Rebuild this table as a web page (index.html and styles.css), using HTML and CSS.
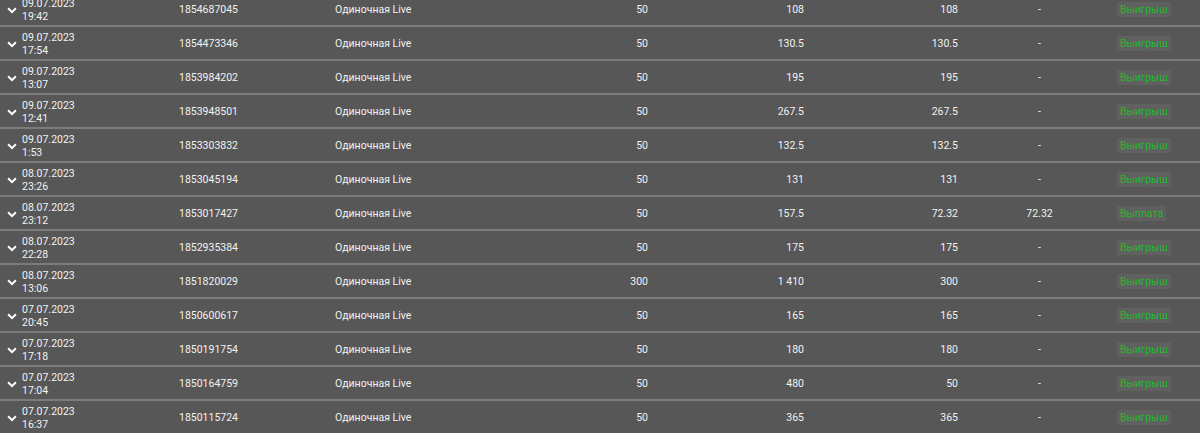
FILE: index.html
```html
<!DOCTYPE html>
<html lang="ru">
<head>
    <meta charset="UTF-8">
    <meta name="viewport" content="width=device-width, initial-scale=1.0">
    <title>История ставок</title>
    <link rel="stylesheet" href="styles.css">
</head>
<body>
    <div class="bets">
        <div class="bet-row">
            <div class="cell date"><svg class="chevron" viewBox="0 0 9 6"><polyline points="1,1 4.5,4.5 8,1"/></svg><span>09.07.2023<br>19:42</span></div>
            <div class="cell">1854687045</div>
            <div class="cell">Одиночная Live</div>
            <div class="cell num">50</div>
            <div class="cell num">108</div>
            <div class="cell num">108</div>
            <div class="cell center">-</div>
            <div class="cell"><span class="status">Выигрыш</span></div>
        </div>
        <div class="bet-row">
            <div class="cell date"><svg class="chevron" viewBox="0 0 9 6"><polyline points="1,1 4.5,4.5 8,1"/></svg><span>09.07.2023<br>17:54</span></div>
            <div class="cell">1854473346</div>
            <div class="cell">Одиночная Live</div>
            <div class="cell num">50</div>
            <div class="cell num">130.5</div>
            <div class="cell num">130.5</div>
            <div class="cell center">-</div>
            <div class="cell"><span class="status">Выигрыш</span></div>
        </div>
        <div class="bet-row">
            <div class="cell date"><svg class="chevron" viewBox="0 0 9 6"><polyline points="1,1 4.5,4.5 8,1"/></svg><span>09.07.2023<br>13:07</span></div>
            <div class="cell">1853984202</div>
            <div class="cell">Одиночная Live</div>
            <div class="cell num">50</div>
            <div class="cell num">195</div>
            <div class="cell num">195</div>
            <div class="cell center">-</div>
            <div class="cell"><span class="status">Выигрыш</span></div>
        </div>
        <div class="bet-row">
            <div class="cell date"><svg class="chevron" viewBox="0 0 9 6"><polyline points="1,1 4.5,4.5 8,1"/></svg><span>09.07.2023<br>12:41</span></div>
            <div class="cell">1853948501</div>
            <div class="cell">Одиночная Live</div>
            <div class="cell num">50</div>
            <div class="cell num">267.5</div>
            <div class="cell num">267.5</div>
            <div class="cell center">-</div>
            <div class="cell"><span class="status">Выигрыш</span></div>
        </div>
        <div class="bet-row">
            <div class="cell date"><svg class="chevron" viewBox="0 0 9 6"><polyline points="1,1 4.5,4.5 8,1"/></svg><span>09.07.2023<br>1:53</span></div>
            <div class="cell">1853303832</div>
            <div class="cell">Одиночная Live</div>
            <div class="cell num">50</div>
            <div class="cell num">132.5</div>
            <div class="cell num">132.5</div>
            <div class="cell center">-</div>
            <div class="cell"><span class="status">Выигрыш</span></div>
        </div>
        <div class="bet-row">
            <div class="cell date"><svg class="chevron" viewBox="0 0 9 6"><polyline points="1,1 4.5,4.5 8,1"/></svg><span>08.07.2023<br>23:26</span></div>
            <div class="cell">1853045194</div>
            <div class="cell">Одиночная Live</div>
            <div class="cell num">50</div>
            <div class="cell num">131</div>
            <div class="cell num">131</div>
            <div class="cell center">-</div>
            <div class="cell"><span class="status">Выигрыш</span></div>
        </div>
        <div class="bet-row">
            <div class="cell date"><svg class="chevron" viewBox="0 0 9 6"><polyline points="1,1 4.5,4.5 8,1"/></svg><span>08.07.2023<br>23:12</span></div>
            <div class="cell">1853017427</div>
            <div class="cell">Одиночная Live</div>
            <div class="cell num">50</div>
            <div class="cell num">157.5</div>
            <div class="cell num">72.32</div>
            <div class="cell center">72.32</div>
            <div class="cell"><span class="status">Выплата</span></div>
        </div>
        <div class="bet-row">
            <div class="cell date"><svg class="chevron" viewBox="0 0 9 6"><polyline points="1,1 4.5,4.5 8,1"/></svg><span>08.07.2023<br>22:28</span></div>
            <div class="cell">1852935384</div>
            <div class="cell">Одиночная Live</div>
            <div class="cell num">50</div>
            <div class="cell num">175</div>
            <div class="cell num">175</div>
            <div class="cell center">-</div>
            <div class="cell"><span class="status">Выигрыш</span></div>
        </div>
        <div class="bet-row">
            <div class="cell date"><svg class="chevron" viewBox="0 0 9 6"><polyline points="1,1 4.5,4.5 8,1"/></svg><span>08.07.2023<br>13:06</span></div>
            <div class="cell">1851820029</div>
            <div class="cell">Одиночная Live</div>
            <div class="cell num">300</div>
            <div class="cell num">1&nbsp;410</div>
            <div class="cell num">300</div>
            <div class="cell center">-</div>
            <div class="cell"><span class="status">Выигрыш</span></div>
        </div>
        <div class="bet-row">
            <div class="cell date"><svg class="chevron" viewBox="0 0 9 6"><polyline points="1,1 4.5,4.5 8,1"/></svg><span>07.07.2023<br>20:45</span></div>
            <div class="cell">1850600617</div>
            <div class="cell">Одиночная Live</div>
            <div class="cell num">50</div>
            <div class="cell num">165</div>
            <div class="cell num">165</div>
            <div class="cell center">-</div>
            <div class="cell"><span class="status">Выигрыш</span></div>
        </div>
        <div class="bet-row">
            <div class="cell date"><svg class="chevron" viewBox="0 0 9 6"><polyline points="1,1 4.5,4.5 8,1"/></svg><span>07.07.2023<br>17:18</span></div>
            <div class="cell">1850191754</div>
            <div class="cell">Одиночная Live</div>
            <div class="cell num">50</div>
            <div class="cell num">180</div>
            <div class="cell num">180</div>
            <div class="cell center">-</div>
            <div class="cell"><span class="status">Выигрыш</span></div>
        </div>
        <div class="bet-row">
            <div class="cell date"><svg class="chevron" viewBox="0 0 9 6"><polyline points="1,1 4.5,4.5 8,1"/></svg><span>07.07.2023<br>17:04</span></div>
            <div class="cell">1850164759</div>
            <div class="cell">Одиночная Live</div>
            <div class="cell num">50</div>
            <div class="cell num">480</div>
            <div class="cell num">50</div>
            <div class="cell center">-</div>
            <div class="cell"><span class="status">Выигрыш</span></div>
        </div>
        <div class="bet-row">
            <div class="cell date"><svg class="chevron" viewBox="0 0 9 6"><polyline points="1,1 4.5,4.5 8,1"/></svg><span>07.07.2023<br>16:37</span></div>
            <div class="cell">1850115724</div>
            <div class="cell">Одиночная Live</div>
            <div class="cell num">50</div>
            <div class="cell num">365</div>
            <div class="cell num">365</div>
            <div class="cell center">-</div>
            <div class="cell"><span class="status">Выигрыш</span></div>
        </div>
    </div>
</body>
</html>
```

FILE: styles.css
```css
body {
    margin: 0;
    background: #575757;
    font-family: Roboto, "Liberation Sans", sans-serif;
    font-size: 10.5px;
    color: #f2f2f2;
    overflow: hidden;
}

.bets {
    margin-top: -7px;
}

.bet-row {
    display: grid;
    grid-template-columns: 179px 156px 165px 148px 156px 154px 158px 1fr;
    height: 32px;
    border-bottom: 2px solid #7c7c7c;
}

.cell {
    display: flex;
    align-items: center;
    line-height: 13px;
    padding-top: 1px;
}

.num {
    justify-content: flex-end;
}

.center {
    justify-content: center;
    padding-left: 5px;
}

.date {
    padding-left: 7px;
}

.chevron {
    width: 10px;
    height: 7px;
    margin-right: 5px;
    margin-top: 1px;
    fill: none;
    stroke: #fff;
    stroke-width: 1.8;
}

.status {
    margin-left: 1px;
    padding: 1px 3px;
    background: #606060;
    color: #1fbd1f;
    line-height: 13px;
}
```
